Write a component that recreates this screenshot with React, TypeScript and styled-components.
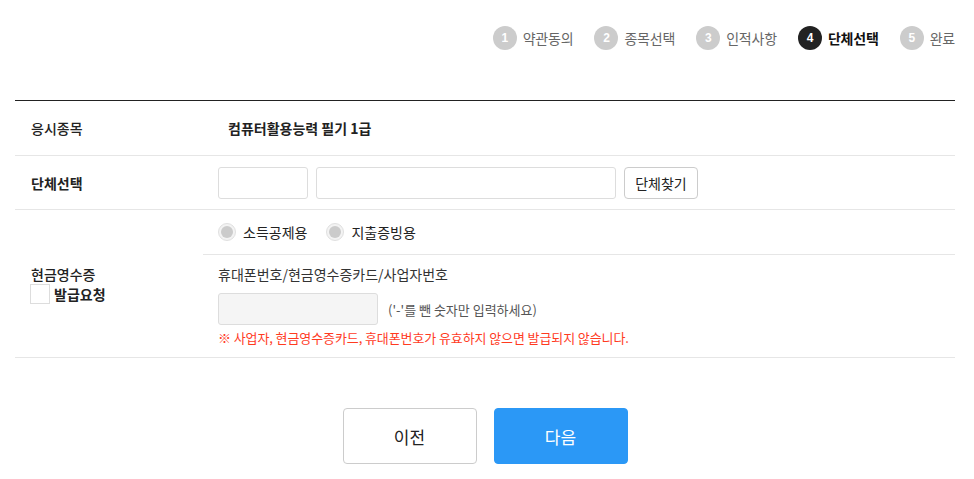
import * as React from 'react';
import styled, { createGlobalStyle } from 'styled-components';

const GlobalStyle = createGlobalStyle`
  html, body {
    margin: 0;
    padding: 0;
    background: #fff;
  }
  body {
    font-family: 'Noto Sans CJK KR', 'Noto Sans', sans-serif;
    color: #222;
  }
  * {
    box-sizing: border-box;
  }
`;

const steps = ['약관동의', '종목선택', '인적사항', '단체선택', '완료'];
const activeStep = 3;

const Page = styled.div`
  width: 940px;
  margin-left: 15px;
`;

// Progress indicator at the top right
const StepList = styled.ol`
  display: flex;
  justify-content: flex-end;
  gap: 21px;
  list-style: none;
  margin: 0;
  padding: 26px 0 0;
  height: 50px;
`;

const Step = styled.li<{ $active: boolean }>`
  display: flex;
  align-items: center;
  gap: 6px;
  font-size: 14px;
  line-height: 24px;
  letter-spacing: -0.2px;
  color: ${p => (p.$active ? '#111' : '#666')};
  font-weight: ${p => (p.$active ? 700 : 400)};
`;

const StepNum = styled.span<{ $active: boolean }>`
  width: 24px;
  height: 24px;
  border-radius: 50%;
  display: flex;
  align-items: center;
  justify-content: center;
  background: ${p => (p.$active ? '#222' : '#ccc')};
  color: #fff;
  font-family: 'Liberation Sans', Arial, sans-serif;
  font-weight: 700;
  font-size: 12px;
`;

const Table = styled.div`
  margin-top: 50px;
  border-top: 1px solid #222;
  display: grid;
  grid-template-columns: 188px 1fr;
`;

const Label = styled.div<{ $height: number; $bold?: boolean }>`
  height: ${p => p.$height}px;
  border-bottom: 1px solid #e6e6e6;
  padding-left: 16px;
  display: flex;
  flex-direction: column;
  justify-content: center;
  font-size: 14px;
  font-weight: ${p => (p.$bold ? 700 : 500)};
  color: #222;
`;

const Value = styled.div<{ $height: number }>`
  height: ${p => p.$height}px;
  border-bottom: 1px solid #e6e6e6;
  padding-left: 15px;
  display: flex;
  align-items: center;
  gap: 8px;
  font-size: 14px;
`;

const SubjectName = styled.span`
  font-weight: 700;
  padding-left: 10px;
`;

const TextInput = styled.input<{ $width: number; $disabled?: boolean }>`
  width: ${p => p.$width}px;
  height: 32px;
  border: 1px solid #ddd;
  border-radius: 3px;
  background: ${p => (p.$disabled ? '#f5f5f5' : '#fff')};
  font: inherit;
  padding: 0 8px;
  outline: none;
`;

const SmallButton = styled.button`
  width: 74px;
  height: 32px;
  border: 1px solid #ccc;
  border-radius: 4px;
  background: #fff;
  font-family: inherit;
  font-size: 14px;
  color: #222;
  padding: 0;
`;

const ReceiptValue = styled.div`
  height: 148px;
  border-bottom: 1px solid #e6e6e6;
  display: flex;
  flex-direction: column;
`;

const RadioRow = styled.div`
  height: 45px;
  border-bottom: 1px solid #e6e6e6;
  padding-left: 15px;
  display: flex;
  align-items: center;
  gap: 19px;
`;

const RadioLabel = styled.label`
  display: flex;
  align-items: center;
  gap: 7px;
  font-size: 14px;
  color: #222;
`;

const RadioMark = styled.span`
  width: 18px;
  height: 18px;
  border-radius: 50%;
  border: 1px solid #e0e0e0;
  background: #f3f3f3;
  display: flex;
  align-items: center;
  justify-content: center;
  &::after {
    content: '';
    width: 12px;
    height: 12px;
    border-radius: 50%;
    background: #cbcbcb;
  }
`;

const NumberBlock = styled.div`
  padding: 8px 0 0 15px;
  display: flex;
  flex-direction: column;
`;

const FieldTitle = styled.div`
  font-size: 14px;
  line-height: 22px;
  color: #333;
`;

const InputLine = styled.div`
  margin-top: 8px;
  display: flex;
  align-items: center;
  gap: 10px;
`;

const Hint = styled.span`
  font-size: 13px;
  color: #555;
`;

const Warning = styled.div`
  margin-top: 3px;
  font-size: 13px;
  line-height: 20px;
  letter-spacing: -0.1px;
  color: #ff3b1f;
`;

const CheckRow = styled.label`
  display: flex;
  align-items: center;
  gap: 4px;
  margin-left: -1px;
  font-weight: 700;
`;

const CheckBox = styled.span`
  width: 20px;
  height: 20px;
  border: 1px solid #ddd;
  background: #fff;
`;

const Actions = styled.div`
  margin-top: 50px;
  display: flex;
  justify-content: center;
  gap: 17px;
`;

const ActionButton = styled.button<{ $primary?: boolean }>`
  width: 134px;
  height: 56px;
  border-radius: 4px;
  border: 1px solid ${p => (p.$primary ? '#2b98f6' : '#ccc')};
  background: ${p => (p.$primary ? '#2b98f6' : '#fff')};
  color: ${p => (p.$primary ? '#fff' : '#222')};
  font-family: inherit;
  font-size: 17px;
  font-weight: 400;
  padding: 0;
`;

export default function App() {
  return (
    <Page>
      <GlobalStyle />
      <StepList>
        {steps.map((name, i) => (
          <Step key={name} $active={i === activeStep}>
            <StepNum $active={i === activeStep}>{i + 1}</StepNum>
            {name}
          </Step>
        ))}
      </StepList>

      <Table>
        <Label $height={55}>응시종목</Label>
        <Value $height={55}>
          <SubjectName>컴퓨터활용능력 필기 1급</SubjectName>
        </Value>

        <Label $height={54} $bold>단체선택</Label>
        <Value $height={54}>
          <TextInput $width={90} />
          <TextInput $width={300} />
          <SmallButton>단체찾기</SmallButton>
        </Value>

        <Label $height={148}>
          <span>현금영수증</span>
          <CheckRow>
            <CheckBox />
            발급요청
          </CheckRow>
        </Label>
        <ReceiptValue>
          <RadioRow>
            <RadioLabel>
              <RadioMark />
              소득공제용
            </RadioLabel>
            <RadioLabel>
              <RadioMark />
              지출증빙용
            </RadioLabel>
          </RadioRow>
          <NumberBlock>
            <FieldTitle>휴대폰번호/현금영수증카드/사업자번호</FieldTitle>
            <InputLine>
              <TextInput $width={160} $disabled disabled />
              <Hint>('-'를 뺀 숫자만 입력하세요)</Hint>
            </InputLine>
            <Warning>※ 사업자, 현금영수증카드, 휴대폰번호가 유효하지 않으면 발급되지 않습니다.</Warning>
          </NumberBlock>
        </ReceiptValue>
      </Table>

      <Actions>
        <ActionButton>이전</ActionButton>
        <ActionButton $primary>다음</ActionButton>
      </Actions>
    </Page>
  );
}
